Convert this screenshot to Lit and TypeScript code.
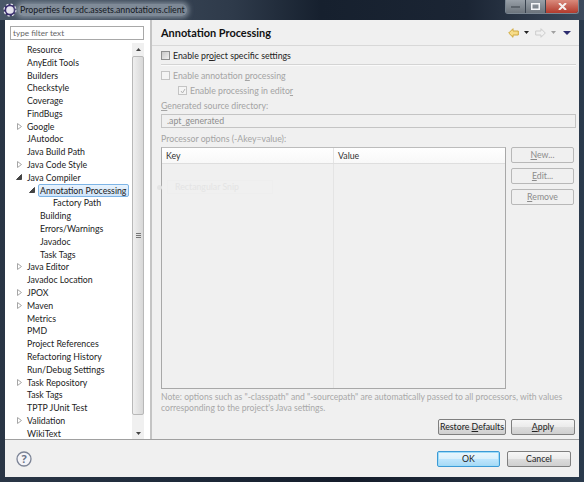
import { LitElement, html, css, nothing } from 'lit';
import { customElement } from 'lit/decorators.js';

type Row = { label: string; depth?: number; twisty?: 'closed' | 'open'; selected?: boolean };

const rows: Row[] = [
  { label: 'Resource' },
  { label: 'AnyEdit Tools' },
  { label: 'Builders' },
  { label: 'Checkstyle' },
  { label: 'Coverage' },
  { label: 'FindBugs' },
  { label: 'Google', twisty: 'closed' },
  { label: 'JAutodoc' },
  { label: 'Java Build Path' },
  { label: 'Java Code Style', twisty: 'closed' },
  { label: 'Java Compiler', twisty: 'open' },
  { label: 'Annotation Processing', depth: 1, twisty: 'open', selected: true },
  { label: 'Factory Path', depth: 2 },
  { label: 'Building', depth: 1 },
  { label: 'Errors/Warnings', depth: 1 },
  { label: 'Javadoc', depth: 1 },
  { label: 'Task Tags', depth: 1 },
  { label: 'Java Editor', twisty: 'closed' },
  { label: 'Javadoc Location' },
  { label: 'JPOX', twisty: 'closed' },
  { label: 'Maven', twisty: 'closed' },
  { label: 'Metrics' },
  { label: 'PMD' },
  { label: 'Project References' },
  { label: 'Refactoring History' },
  { label: 'Run/Debug Settings' },
  { label: 'Task Repository', twisty: 'closed' },
  { label: 'Task Tags' },
  { label: 'TPTP JUnit Test' },
  { label: 'Validation', twisty: 'closed' },
  { label: 'WikiText' },
];

@customElement('app-root')
export class AppRoot extends LitElement {
  static styles = css`
    :host {
      display: block;
      width: 584px;
      height: 482px;
      overflow: hidden;
      font-family: 'Lato', 'Open Sans', sans-serif;
      font-size: 8.75px;
      color: #222;
    }

    .window {
      height: 482px;
      box-sizing: border-box;
      display: flex;
      flex-direction: column;
      background: linear-gradient(90deg, #2a3646 0%, #1e2a3a 30%, #141c2a 60%, #2a3a4c 100%);
      padding: 0 5px 5px 5px;
    }

    .titlebar {
      height: 20px;
      flex: none;
      display: flex;
      align-items: center;
      background: linear-gradient(90deg, #4a5868 0%, #2e3a4a 40%, #16202e 55%, #1b2534 80%, #3c4a5c 100%);
      margin: 0 -5px;
      padding: 0 5px 0 3px;
    }

    .title-text {
      margin-left: 1px;
      padding: 0 2px;
      font-size: 8.8px;
      line-height: 12px;
      color: #14181f;
      background: rgba(150, 160, 172, 0.75);
      box-shadow: 0 0 5px 2px rgba(150, 160, 172, 0.75);
      border-radius: 5px;
    }

    .caption {
      margin-left: auto;
      margin-top: -7px;
      display: flex;
      height: 13px;
      border: 1px solid #7a8692;
      border-top: none;
      border-radius: 0 0 3px 3px;
    }

    .caption span {
      display: flex;
      align-items: center;
      justify-content: center;
      width: 19px;
      background: linear-gradient(#98a0a8, #6c747c);
      border-right: 1px solid #38424e;
    }

    .caption .close {
      width: 32px;
      border-right: none;
      background: linear-gradient(#d98a7c, #b23a2c);
      border-radius: 0 0 3px 0;
    }

    .body {
      flex: 1;
      display: flex;
      flex-direction: column;
      background: #f0f0f0;
      min-height: 0;
    }

    .main {
      flex: 1;
      display: flex;
      min-height: 0;
      border-bottom: 1px solid #a0a0a0;
    }

    /* left side */
    .nav {
      width: 147px;
      box-sizing: border-box;
      flex: none;
      background: #fff;
      display: flex;
      flex-direction: column;
      border-right: 2px solid #c4c4c4;
    }

    .filter {
      margin: 6px 0 0 5px;
      width: 134px;
      height: 14px;
      box-sizing: border-box;
      border: 1px solid #a8a8a8;
      font-size: 8.2px;
      line-height: 12px;
      color: #666;
      padding-left: 2px;
    }

    .tree-wrap {
      flex: 1;
      display: flex;
      min-height: 0;
      margin-top: 3px;
    }

    .tree {
      flex: 1;
      min-width: 0;
    }

    .row {
      height: 12.8px;
      line-height: 12.8px;
      display: flex;
      align-items: center;
      white-space: nowrap;
    }

    .twisty {
      width: 8px;
      flex: none;
      display: flex;
      justify-content: center;
    }

    .label {
      margin-left: 2px;
      padding: 0 2px 0 1px;
      border: 1px solid transparent;
      line-height: 11px;
    }

    .row.selected .label {
      border-color: #7db4e6;
      border-radius: 2px;
      background: linear-gradient(#e8f3fd, #cfe4f9);
    }

    .scrollbar {
      width: 12px;
      flex: none;
      margin-right: 6px;
      background: #f0f0f0;
      display: flex;
      flex-direction: column;
    }

    .arrow {
      height: 12px;
      flex: none;
      display: flex;
      align-items: center;
      justify-content: center;
    }

    .thumb {
      flex: 1;
      margin: 1px 0 12px;
      border: 1px solid #b8b8b8;
      border-radius: 2px;
      background: linear-gradient(90deg, #efefef, #d8d8d8);
      display: flex;
      align-items: center;
      justify-content: center;
    }

    .grip {
      width: 5px;
      height: 5px;
      background: repeating-linear-gradient(#777 0 1px, transparent 1px 2px);
    }

    /* right side */
    .page {
      flex: 1;
      min-width: 0;
      display: flex;
      flex-direction: column;
      position: relative;
    }

    .page-head {
      height: 26px;
      box-sizing: border-box;
      flex: none;
      display: flex;
      align-items: center;
      padding: 0 8px 0 9px;
      border-bottom: 1px solid #d8d8d8;
    }

    .page-head h1 {
      margin: 0;
      font-size: 10.95px;
      font-weight: 700;
      color: #111;
    }

    .hist {
      margin-left: auto;
      display: flex;
      align-items: center;
      gap: 5px;
    }

    .hist .next {
      margin-left: 1px;
    }

    .hist .view {
      margin-left: 2px;
    }

    .content {
      flex: 1;
      min-height: 0;
      display: flex;
      flex-direction: column;
      padding: 0 3px 0 9px;
      color: #a4a4a4;
    }

    .check {
      display: flex;
      align-items: center;
      gap: 3px;
      height: 13px;
    }

    .box {
      width: 7px;
      height: 7px;
      border: 1px solid #c4c4c4;
      background: #f4f4f4;
      flex: none;
      display: flex;
      align-items: center;
      justify-content: center;
    }

    .check.master {
      color: #222;
      margin-top: 3px;
    }

    .check.master .box {
      border-color: #8e8f8f;
      background: linear-gradient(135deg, #c8c8c8, #f0f0f0);
    }

    .rule {
      height: 1px;
      background: #d4d4d4;
      margin-top: 2px;
      border-bottom: 1px solid #fafafa;
    }

    .enable {
      margin-top: 3px;
    }

    .nested {
      margin: 2px 0 0 17px;
    }

    .caption-label {
      margin-top: 2px;
      height: 13px;
      line-height: 13px;
    }

    .field {
      margin-top: 2px;
      height: 14px;
      box-sizing: border-box;
      line-height: 12px;
      border: 1px solid #c4c4c4;
      padding-left: 5px;
      color: #8e8e8e;
    }

    .field + .caption-label {
      margin-top: 4px;
    }

    .options {
      flex: 1;
      min-height: 0;
      display: flex;
      gap: 5px;
      margin-top: 2px;
    }

    .table {
      flex: 1;
      min-width: 0;
      border: 1px solid #a8a8a8;
      border-top-color: #bcbcbc;
      display: flex;
      flex-direction: column;
    }

    .thead {
      height: 16px;
      box-sizing: border-box;
      flex: none;
      display: flex;
      background: linear-gradient(#fff, #f8f8f8);
      border-bottom: 1px solid #dedede;
      color: #333;
      line-height: 15px;
    }

    .thead div {
      padding-left: 4px;
    }

    .col-key {
      width: 172px;
      box-sizing: border-box;
      flex: none;
      border-right: 1px solid #e4e4e4;
    }

    .tbody {
      flex: 1;
      display: flex;
    }

    .side {
      width: 63px;
      margin-right: 2px;
      flex: none;
      display: flex;
      flex-direction: column;
      gap: 5px;
    }

    .btn {
      height: 16px;
      box-sizing: border-box;
      line-height: 14px;
      text-align: center;
      border: 1px solid #b8b8b8;
      border-radius: 2px;
      background: #f0f0f0;
      color: #8c8c8c;
    }

    u {
      text-underline-offset: 1px;
    }

    .note {
      margin-top: 3px;
      height: 22px;
      line-height: 11px;
      font-size: 8.6px;
      color: #a8a8a8;
      white-space: nowrap;
    }

    .actions {
      flex: none;
      height: 25px;
      box-sizing: border-box;
      display: flex;
      justify-content: flex-end;
      gap: 5px;
      padding: 5px 1px 0 0;
    }

    .push {
      height: 16px;
      box-sizing: border-box;
      line-height: 14px;
      text-align: center;
      border: 1px solid #7f7f7f;
      border-radius: 2px;
      background: linear-gradient(#f6f6f6 0%, #ebebeb 50%, #dcdcdc 51%, #cfcfcf 100%);
      color: #222;
    }

    .restore { width: 68px; }
    .apply { width: 64px; }

    .footer {
      height: 37px;
      flex: none;
      box-sizing: border-box;
      display: flex;
      align-items: center;
      gap: 7px;
      padding: 0 8px 0 11px;
    }

    .footer .help {
      margin-right: auto;
      display: flex;
    }

    .footer .push {
      width: 64px;
    }

    .footer .ok {
      width: 63px;
      border-color: #3c9ad6;
      box-shadow: inset 0 0 0 1px #9fdcf8;
      background: linear-gradient(#eaf6fd 0%, #d9f0fc 50%, #bee6fd 51%, #a7d9f5 100%);
    }

    /* ghost of a snipping tool tooltip caught in the capture */
    .ghost {
      position: absolute;
      left: 5px;
      top: 160px;
      display: flex;
      align-items: center;
      gap: 5px;
      color: #e4e4e4;
    }

    .ghost i {
      width: 5px;
      height: 5px;
      border-radius: 50%;
      background: #e4e4e4;
    }

    .ghost span {
      width: 106px;
      box-sizing: border-box;
      line-height: 12px;
      padding-left: 7px;
      border: 1px solid #eeeeee;
    }
  `;

  private twisty(kind?: 'closed' | 'open') {
    if (kind === 'closed') {
      return html`<svg width="5" height="7" viewBox="0 0 5 7"><path d="M.5.5 4.5 3.5.5 6.5Z" fill="#fff" stroke="#a6a6a6"/></svg>`;
    }
    if (kind === 'open') {
      return html`<svg width="6" height="6" viewBox="0 0 6 6"><path d="M5.5.5V5.5H.5Z" fill="#444" stroke="#444"/></svg>`;
    }
    return nothing;
  }

  private renderRow(r: Row) {
    const depth = r.depth ?? 0;
    return html`
      <div class="row ${r.selected ? 'selected' : ''}" style="padding-left:${10 + depth * 13}px">
        <span class="twisty">${this.twisty(r.twisty)}</span>
        <span class="label">${r.label}</span>
      </div>
    `;
  }

  render() {
    return html`
      <div class="window">
        <div class="titlebar">
          <svg width="14" height="14" viewBox="0 0 14 14">
            <circle cx="7" cy="7" r="6" fill="#3a2f6e"/>
            <circle cx="7" cy="7" r="3.8" fill="#e8e6f0"/>
            <circle cx="7" cy="7" r="6" fill="none" stroke="#e8e8f0" stroke-width="1.2" stroke-dasharray="2.4 2.3"/>
          </svg>
          <span class="title-text">Properties for sdc.assets.annotations.client</span>
          <div class="caption">
            <span><svg width="9" height="3"><rect width="9" height="2" y="1" fill="#5c646c"/></svg></span>
            <span style="width:19px"><svg width="9" height="7"><rect x=".75" y=".75" width="7.5" height="5.5" fill="none" stroke="#f4f6f8" stroke-width="1.5"/></svg></span>
            <span class="close"><svg width="9" height="7" viewBox="0 0 9 7"><path d="M1 0 8 7M8 0 1 7" stroke="#f6f0ee" stroke-width="2"/></svg></span>
          </div>
        </div>
        <div class="body">
          <div class="main">
            <div class="nav">
              <div class="filter">type filter text</div>
              <div class="tree-wrap">
                <div class="tree">${rows.map((r) => this.renderRow(r))}</div>
                <div class="scrollbar">
                  <div class="arrow"><svg width="5" height="3"><path d="M2.5 0 5 3H0Z" fill="#444"/></svg></div>
                  <div class="thumb"><div class="grip"></div></div>
                  <div class="arrow"><svg width="5" height="3"><path d="M0 0H5L2.5 3Z" fill="#444"/></svg></div>
                </div>
              </div>
            </div>
            <div class="page">
              <div class="page-head">
                <h1>Annotation Processing</h1>
                <div class="hist">
                  <svg width="11" height="10" viewBox="0 0 11 10"><path d="M.7 5 5 .7V3H10.3V7H5V9.3Z" fill="#f6dc8a" stroke="#d0a83c" stroke-linejoin="round"/></svg>
                  <svg width="5" height="3"><path d="M0 0H5L2.5 3Z" fill="#222"/></svg>
                  <svg class="next" width="11" height="10" viewBox="0 0 11 10"><path d="M10.3 5 6 .7V3H.7V7H6V9.3Z" fill="#f0f0f0" stroke="#cccccc" stroke-linejoin="round"/></svg>
                  <svg width="5" height="3"><path d="M0 0H5L2.5 3Z" fill="#a0a0a0"/></svg>
                  <svg class="view" width="8" height="4"><path d="M0 0H8L4 4Z" fill="#2c2c6e"/></svg>
                </div>
              </div>
              <div class="content">
                <div class="check master"><span class="box"></span><span>Enable pr<u>o</u>ject specific settings</span></div>
                <div class="rule"></div>
                <div class="check enable"><span class="box"></span><span>Enable annotation <u>p</u>rocessing</span></div>
                <div class="check nested">
                  <span class="box"><svg width="6" height="6" viewBox="0 0 6 6"><path d="M1 3 2.5 5 5 1" fill="none" stroke="#b4b4b4"/></svg></span>
                  <span>Enable processing in edito<u>r</u></span>
                </div>
                <div class="caption-label"><u>G</u>enerated source directory:</div>
                <div class="field">.apt_generated</div>
                <div class="caption-label">Processor options (-Akey=value):</div>
                <div class="options">
                  <div class="table">
                    <div class="thead"><div class="col-key">Key</div><div>Value</div></div>
                    <div class="tbody"><div class="col-key"></div></div>
                  </div>
                  <div class="side">
                    <div class="btn"><u>N</u>ew...</div>
                    <div class="btn"><u>E</u>dit...</div>
                    <div class="btn"><u>R</u>emove</div>
                  </div>
                </div>
                <div class="note">
                  Note: options such as "-classpath" and "-sourcepath" are automatically passed to all processors, with values<br />
                  corresponding to the project's Java settings.
                </div>
                <div class="actions">
                  <div class="push restore">Restore <u>D</u>efaults</div>
                  <div class="push apply"><u>A</u>pply</div>
                </div>
              </div>
              <div class="ghost"><i></i><span>Rectangular Snip</span></div>
            </div>
          </div>
          <div class="footer">
            <div class="help">
              <svg width="16" height="16" viewBox="0 0 16 16">
                <circle cx="8" cy="8" r="7" fill="#f4f4f8" stroke="#7c8496" stroke-width="1.3"/>
                <text x="8" y="12" text-anchor="middle" font-size="11" font-weight="700" fill="#6c7488" font-family="Open Sans, sans-serif">?</text>
              </svg>
            </div>
            <div class="push ok">OK</div>
            <div class="push">Cancel</div>
          </div>
        </div>
      </div>
    `;
  }
}
